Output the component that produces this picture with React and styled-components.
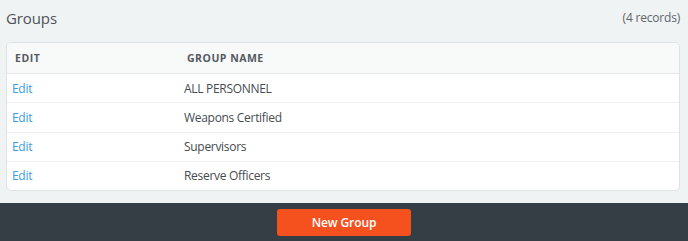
import React from 'react';
import styled, { createGlobalStyle } from 'styled-components';

const GlobalStyle = createGlobalStyle`
  html, body {
    margin: 0;
    padding: 0;
    background: #f0f3f4;
    font-family: 'Open Sans', 'Liberation Sans', sans-serif;
  }
`;

const Page = styled.div`
  display: flex;
  flex-direction: column;
  width: 688px;
  height: 241px;
`;

const Content = styled.div`
  flex: 1;
  padding: 0 8px 0 6px;
`;

const TitleBar = styled.div`
  align-items: center;
  display: flex;
  height: 35px;
  justify-content: space-between;
  padding-bottom: 7px;
`;

const Title = styled.h1`
  color: #4d5257;
  font-size: 15px;
  font-weight: 400;
  letter-spacing: -0.1px;
  margin: 0;
`;

const Count = styled.span`
  color: #5f656a;
  font-size: 12px;
  letter-spacing: -0.2px;
`;

const Card = styled.div`
  background: #fff;
  border: 1px solid #dde2e5;
  border-radius: 5px;
  overflow: hidden;
`;

const Table = styled.table`
  border-collapse: collapse;
  width: 100%;
`;

const HeadCell = styled.th`
  background: #f8f9f9;
  border-bottom: 1px solid #e4e8ea;
  color: #555a5f;
  font-size: 10.5px;
  font-weight: 700;
  height: 30px;
  letter-spacing: 0.5px;
  padding: 0 0 0 8px;
  text-align: left;
  text-transform: uppercase;
  width: ${(props) => props.width || 'auto'};
`;

const Row = styled.tr`
  border-bottom: 1px solid #eef1f2;
  &:last-child {
    border-bottom: none;
  }
`;

const Cell = styled.td`
  color: #464b50;
  font-size: 12px;
  height: 28.25px;
  letter-spacing: -0.3px;
  padding: 0 0 0 5px;
`;

const EditLink = styled.a`
  color: #3a9ce6;
  cursor: pointer;
  text-decoration: none;
`;

const Footer = styled.div`
  align-items: center;
  background: #343e44;
  display: flex;
  height: 38px;
  justify-content: center;
  margin-top: 12px;
`;

const Button = styled.button`
  background: #f5511f;
  border: none;
  border-radius: 3px;
  color: #fff;
  cursor: pointer;
  font-family: 'Open Sans', 'Liberation Sans', sans-serif;
  font-size: 12px;
  font-weight: 600;
  height: 27px;
  letter-spacing: -0.1px;
  width: 134px;
`;

const groups = ['ALL PERSONNEL', 'Weapons Certified', 'Supervisors', 'Reserve Officers'];

function App() {
  return (
    <>
      <GlobalStyle />
      <Page>
        <Content>
          <TitleBar>
            <Title>Groups</Title>
            <Count>(4 records)</Count>
          </TitleBar>
          <Card>
            <Table>
              <thead>
                <tr>
                  <HeadCell width="164px">Edit</HeadCell>
                  <HeadCell>Group Name</HeadCell>
                </tr>
              </thead>
              <tbody>
                {groups.map((name) => (
                  <Row key={name}>
                    <Cell>
                      <EditLink>Edit</EditLink>
                    </Cell>
                    <Cell>{name}</Cell>
                  </Row>
                ))}
              </tbody>
            </Table>
          </Card>
        </Content>
        <Footer>
          <Button>New Group</Button>
        </Footer>
      </Page>
    </>
  );
}

export default App;
